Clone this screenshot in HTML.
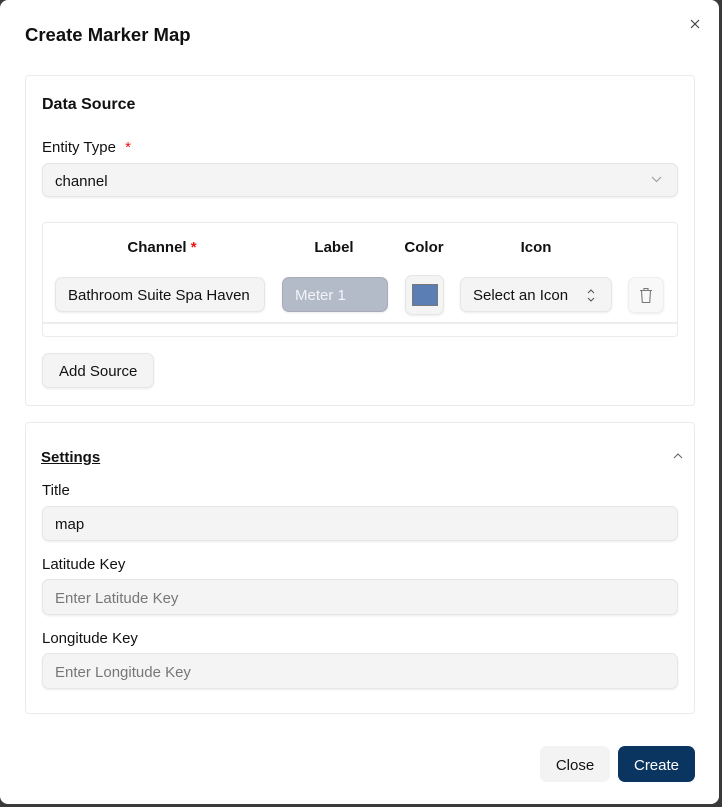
<!DOCTYPE html><html><head><style>
*{box-sizing:border-box;margin:0;padding:0}
body{width:722px;height:807px;background:#3a3a3a;font-family:"Liberation Sans",sans-serif;color:#111;position:relative;overflow:hidden}
.m{position:absolute;left:0;top:0;width:719px;height:804px;background:#fff;border-radius:8px}
.a{position:absolute}
.card{position:absolute;border:1px solid #ebebeb;border-radius:4px;background:#fff}
.in{position:absolute;background:#f4f4f4;border:1px solid #e6e6e6;border-radius:7px;box-shadow:0 1px 2px rgba(0,0,0,.08);font-size:15px;padding-left:12px;padding-top:2px;display:flex;align-items:center}
.lbl{position:absolute;font-size:15px;color:#111}
.h{position:absolute;font-size:15px;font-weight:bold;text-align:center}
.ph{color:#777}
</style></head><body><div class="m">
<div class="a" style="left:25px;top:24px;font-size:18.5px;font-weight:bold">Create Marker Map</div>
<svg class="a" style="left:690px;top:19px" width="10" height="10" viewBox="0 0 10 10"><path d="M1 1L9 9M9 1L1 9" stroke="#444" stroke-width="1.2"/></svg>
<div class="card" style="left:25px;top:75px;width:670px;height:331px"></div>
<div class="a" style="left:42px;top:96px;font-size:16px;font-weight:bold">Data Source</div>
<div class="lbl" style="left:42px;top:139px">Entity Type <span style="color:#e11;margin-left:5px">*</span></div>
<div class="in" style="left:42px;top:163px;width:636px;height:34px">channel</div>
<svg class="a" style="left:651px;top:176px" width="11" height="7" viewBox="0 0 11 7"><path d="M1 1L5.5 5.5L10 1" stroke="#999" fill="none" stroke-width="1.1"/></svg>
<div class="card" style="left:42px;top:222px;width:636px;height:115px"></div>
<div class="a" style="left:43px;top:322px;width:634px;height:2px;background:#ededed"></div>
<div class="h" style="left:100px;top:239px;width:124px">Channel <span style="color:#e11">*</span></div>
<div class="h" style="left:300px;top:239px;width:68px">Label</div>
<div class="h" style="left:394px;top:239px;width:60px">Color</div>
<div class="h" style="left:506px;top:239px;width:60px">Icon</div>
<div class="in" style="left:55px;top:277px;width:210px;height:35px">Bathroom Suite Spa Haven</div>
<div class="in" style="left:282px;top:277px;width:106px;height:35px;background:#b3bac8;color:#f2f4f8;border-color:#aab">Meter 1</div>
<div class="in" style="left:405px;top:275px;width:39px;height:40px;padding:0;justify-content:center"><div style="width:26px;height:22px;background:#5b7fb5;border:1px solid #777"></div></div>
<div class="in" style="left:460px;top:277px;width:152px;height:35px">Select an Icon</div>
<svg class="a" style="left:586px;top:288px" width="10" height="15" viewBox="0 0 10 15"><path d="M2 5L5 2L8 5M2 10L5 13L8 10" stroke="#555" fill="none" stroke-width="1.1"/></svg>
<div class="in" style="left:628px;top:277px;width:36px;height:36px;padding:0;background:#f8f8f8;border-color:#eee;justify-content:center"><svg width="14" height="17" viewBox="0 0 14 17"><path d="M1 3.5H13M5 3.5V1.5H9V3.5M2.5 3.5L3.3 15.5H10.7L11.5 3.5" stroke="#777" fill="none" stroke-width="1.1"/></svg></div>
<div class="in" style="left:42px;top:353px;width:112px;height:35px;padding-left:16px">Add Source</div>
<div class="card" style="left:25px;top:422px;width:670px;height:292px"></div>
<div class="a" style="left:41px;top:449px;font-size:15px;font-weight:bold;text-decoration:underline">Settings</div>
<svg class="a" style="left:673px;top:453px" width="10" height="6" viewBox="0 0 10 6"><path d="M1 5L5 1L9 5" stroke="#666" fill="none" stroke-width="1.1"/></svg>
<div class="lbl" style="left:42px;top:482px">Title</div>
<div class="in" style="left:42px;top:506px;width:636px;height:35px">map</div>
<div class="lbl" style="left:42px;top:556px">Latitude Key</div>
<div class="in ph" style="left:42px;top:579px;width:636px;height:36px">Enter Latitude Key</div>
<div class="lbl" style="left:42px;top:630px">Longitude Key</div>
<div class="in ph" style="left:42px;top:653px;width:636px;height:36px">Enter Longitude Key</div>
<div class="a" style="left:540px;top:746px;width:70px;height:36px;background:#f3f3f3;border-radius:7px;font-size:15px;display:flex;align-items:center;justify-content:center;padding-top:2px">Close</div>
<div class="a" style="left:618px;top:746px;width:77px;height:36px;background:#0b3561;color:#fff;border-radius:7px;font-size:15px;display:flex;align-items:center;justify-content:center;padding-top:2px">Create</div>
</div></body></html>
